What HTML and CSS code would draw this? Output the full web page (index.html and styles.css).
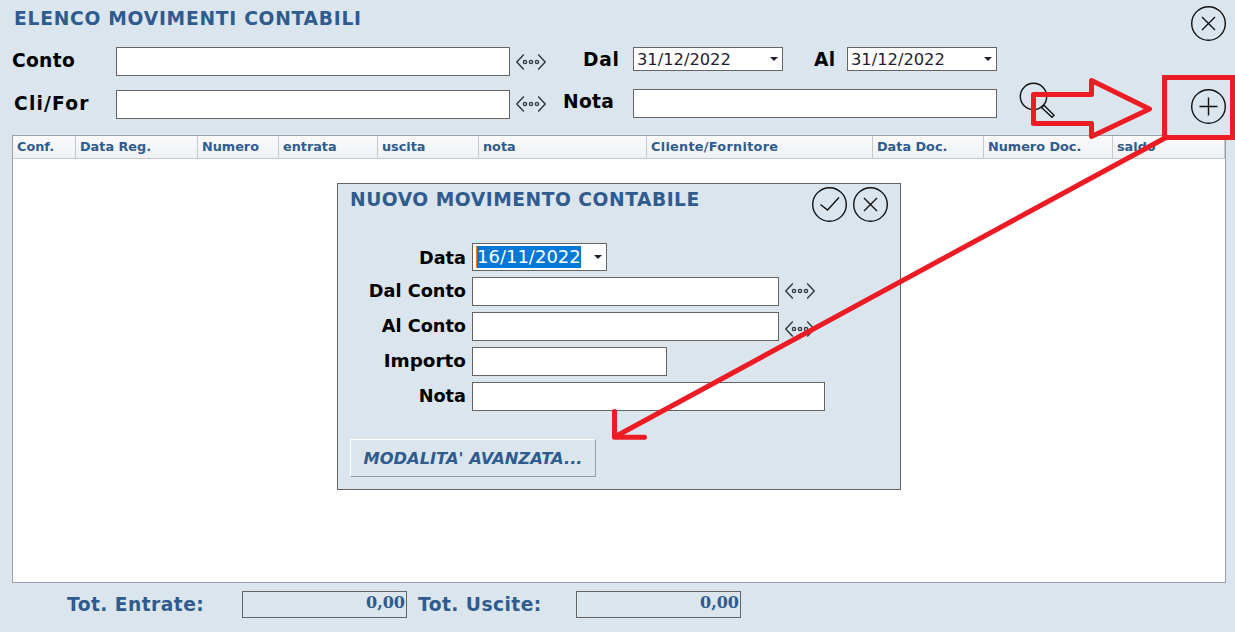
FILE: index.html
```html
<!DOCTYPE html>
<html lang="it">

<head>
    <meta charset="utf-8" />
    <title>Elenco movimenti contabili</title>
    <meta name="viewport" content="width=device-width, initial-scale=1">
    <link rel="stylesheet" href="styles.css">
</head>

<body>
    <!-- shared icons -->
    <svg class="defs" width="0" height="0">
        <symbol id="ic-close" viewBox="0 0 35 35">
            <circle cx="17.5" cy="17.5" r="16.8" />
            <path d="M11 11L24 24M24 11L11 24" />
        </symbol>
        <symbol id="ic-plus" viewBox="0 0 35 35">
            <circle cx="17.5" cy="17.5" r="16.8" />
            <path d="M8.5 17.5H26.5M17.5 8.5V26.5" />
        </symbol>
        <symbol id="ic-check" viewBox="0 0 35 35">
            <circle cx="17.5" cy="17.5" r="16.8" />
            <path d="M8.5 17.5L15.5 23L27 10.5" />
        </symbol>
        <symbol id="ic-pick" viewBox="0 0 30 16">
            <path d="M7.8 .5L.8 8L7.8 15.5M22.2 .5L29.2 8L22.2 15.5" />
            <circle cx="9" cy="8" r="1.6" />
            <circle cx="15" cy="8" r="1.6" />
            <circle cx="21" cy="8" r="1.6" />
        </symbol>
    </svg>

    <div class="titlebar">
        <h1 class="title">ELENCO MOVIMENTI CONTABILI</h1>
        <svg class="round"><use href="#ic-close" /></svg>
    </div>

    <!-- filters -->
    <div class="filters row1">
        <label class="lbl lbl-conto">Conto</label>
        <div class="field wide"></div>
        <svg class="pick"><use href="#ic-pick" /></svg>
        <label class="lbl lbl-dal">Dal</label>
        <div class="field date"><span>31/12/2022</span><i class="caret"></i></div>
        <label class="lbl lbl-al">Al</label>
        <div class="field date"><span>31/12/2022</span><i class="caret"></i></div>
    </div>
    <div class="filters row2">
        <label class="lbl lbl-clifor">Cli/For</label>
        <div class="field wide"></div>
        <svg class="pick"><use href="#ic-pick" /></svg>
        <label class="lbl lbl-nota">Nota</label>
        <div class="field note"></div>
        <svg class="search" viewBox="0 0 36 36">
            <circle cx="14.5" cy="14.5" r="13.2" />
            <path d="M22.5 25.5L25 23.3L35 33.3L33 35.3Z" />
        </svg>
        <svg class="round"><use href="#ic-plus" /></svg>
    </div>

    <!-- list -->
    <div class="grid">
        <div class="head">
            <div>Conf.</div>
            <div>Data Reg.</div>
            <div>Numero</div>
            <div>entrata</div>
            <div>uscita</div>
            <div>nota</div>
            <div class="cli">Cliente/Fornitore</div>
            <div>Data Doc.</div>
            <div>Numero Doc.</div>
            <div>saldo</div>
        </div>
    </div>

    <div class="totals">
        <span class="tot-lbl tot-in">Tot. Entrate:</span>
        <div class="tot-box">0,00</div>
        <span class="tot-lbl tot-out">Tot. Uscite:</span>
        <div class="tot-box">0,00</div>
    </div>

    <!-- new entry window -->
    <div class="dialog">
        <div class="dlg-head">
            <h2 class="title">NUOVO MOVIMENTO CONTABILE</h2>
            <svg class="round"><use href="#ic-check" /></svg>
            <svg class="round"><use href="#ic-close" /></svg>
        </div>
        <div class="form">
            <div class="line line-date">
                <label class="flbl">Data</label>
                <div class="field fdate"><span class="sel">16/11/2022</span><i class="caret"></i></div>
            </div>
            <div class="line">
                <label class="flbl">Dal Conto</label>
                <div class="field conto"></div>
                <svg class="pick"><use href="#ic-pick" /></svg>
            </div>
            <div class="line">
                <label class="flbl">Al Conto</label>
                <div class="field conto"></div>
                <svg class="pick low"><use href="#ic-pick" /></svg>
            </div>
            <div class="line">
                <label class="flbl importo-lbl">Importo</label>
                <div class="field importo"></div>
            </div>
            <div class="line">
                <label class="flbl">Nota</label>
                <div class="field fnote"></div>
            </div>
        </div>
        <div class="adv">MODALITA' AVANZATA...</div>
    </div>

    <!-- red marks -->
    <svg class="marks" viewBox="0 0 1235 632">
        <rect x="1164.5" y="77.5" width="68" height="60" />
        <path class="soft" d="M1033.5 94.5H1091.5V80.5L1149.5 109L1091.5 136.5V123.5H1033.5Z" />
        <path class="soft" d="M1165 138L614.5 437M614.5 411.5V437.3H644.5" />
    </svg>
</body>

</html>
```
FILE: styles.css
```css
* {
    box-sizing: border-box;
}

body {
    position: relative;
    margin: 0;
    width: 1235px;
    height: 632px;
    overflow: hidden;
    background: #dbe5ed;
    color: #000;
    font-family: "DejaVu Sans", Verdana, sans-serif;
}

svg {
    display: block;
    flex: none;
    fill: none;
    stroke: #111;
    stroke-width: 1.4;
}

.defs {
    position: absolute;
}

.titlebar {
    display: flex;
    justify-content: space-between;
    height: 47px;
    padding: 6px 9px 0 14px;
}

.title {
    margin: 0;
    color: #2f5b8f;
    font-size: 18.67px;
    font-weight: bold;
    line-height: 26px;
    letter-spacing: 0.75px;
    white-space: nowrap;
}

.round {
    width: 35px;
    height: 35px;
}

/* filters */
.filters {
    display: flex;
    align-items: flex-start;
    padding-left: 12px;
}

.row1 {
    height: 42px;
}

.row2 {
    height: 46px;
    padding-right: 9px;
}

.lbl {
    flex: none;
    font-size: 18.67px;
    font-weight: bold;
    line-height: 28px;
    letter-spacing: 0.3px;
    white-space: nowrap;
}

.lbl-conto {
    width: 104px;
}

.lbl-clifor {
    width: 104px;
    padding: 1px 0 0 2px;
    letter-spacing: 1.2px;
}

.lbl-dal {
    width: 87px;
    padding-left: 37px;
    margin-top: -1px;
    letter-spacing: 0.7px;
}

.lbl-nota {
    width: 87px;
    padding-left: 17px;
    margin-top: -1px;
}

.lbl-al {
    width: 64px;
    padding-left: 31px;
    margin-top: -1px;
}

.field {
    flex: none;
    height: 29px;
    border: 1px solid #646464;
    background: #fff;
}

.wide {
    width: 394px;
}

.row2 .wide {
    margin-top: 1px;
}

.pick {
    width: 30px;
    height: 16px;
    margin: 7px 0 0 6px;
    stroke: #333a40;
}

.date {
    display: flex;
    align-items: center;
    justify-content: space-between;
    width: 150px;
    height: 24px;
    padding: 0 4px 0 3px;
    color: #1e1e32;
    font-size: 16.3px;
}

.caret {
    border: 4px solid transparent;
    border-top-color: #1e1e32;
    border-bottom: 0;
}

.note {
    width: 364px;
}

.search {
    width: 36px;
    height: 36px;
    margin: -7px 0 0 22px;
}

.row2 .round {
    margin: 0 0 0 auto;
}

/* list */
.grid {
    width: 1214px;
    height: 448px;
    margin-left: 12px;
    border: 1px solid #9aa0a8;
    background: #fff;
}

.head {
    display: grid;
    grid-template-columns: 63px 122px 81px 99px 101px 168px 226px 111px 129px 1fr;
    height: 23px;
    border-bottom: 1px solid #c6c8d0;
    background: linear-gradient(#fafafb, #eff0f2);
    color: #2f5b8f;
    font-size: 12.8px;
    font-weight: bold;
    line-height: 21px;
}

.head div {
    padding-left: 4px;
    border-right: 1px solid #c6c8d0;
    white-space: nowrap;
}

.head .cli {
    letter-spacing: 0.3px;
}

/* totals */
.totals {
    display: flex;
    padding: 8px 0 0 67px;
    color: #2f5b8f;
    font-weight: bold;
}

.tot-lbl {
    font-size: 18.67px;
    line-height: 28px;
    letter-spacing: 0.45px;
    white-space: nowrap;
}

.tot-in {
    width: 175px;
}

.tot-out {
    width: 169px;
    padding-left: 11px;
}

.tot-box {
    width: 165px;
    height: 27px;
    padding-right: 1px;
    border: 1px solid #646464;
    font-family: "DejaVu Serif", serif;
    font-size: 16px;
    line-height: 22px;
    text-align: right;
}

/* new entry window */
.dialog {
    position: absolute;
    left: 337px;
    top: 183px;
    width: 564px;
    height: 307px;
    border: 1px solid #646464;
    background: #dbe5ed;
}

.dlg-head {
    display: flex;
    gap: 6px;
    height: 59px;
    padding: 3px 12px 0 12px;
}

.dlg-head .title {
    margin-right: auto;
    letter-spacing: 0.53px;
}

.form {
    display: flex;
    flex-direction: column;
    gap: 6px;
}

.line {
    display: flex;
    height: 29px;
}

.line-date {
    height: 28px;
}

.flbl {
    width: 128px;
    margin-right: 6px;
    font-size: 17.7px;
    font-weight: bold;
    line-height: 28px;
    text-align: right;
    white-space: nowrap;
}

.line-date .flbl {
    line-height: 30px;
}

.importo-lbl {
    font-size: 18.4px;
}

.fdate {
    display: flex;
    align-items: center;
    justify-content: space-between;
    width: 135px;
    height: 28px;
    padding: 0 4px 0 3px;
}

.sel {
    border-left: 1px solid #f08020;
    background: #0078d7;
    color: #fff;
    font-size: 18px;
    line-height: 22px;
}

.line .pick {
    margin-top: 6px;
}

.line .low {
    margin-top: 9px;
}

.conto {
    width: 307px;
}

.importo {
    width: 195px;
}

.fnote {
    width: 353px;
}

.adv {
    width: 246px;
    height: 38px;
    margin: 28px 0 0 12px;
    border: 1px solid #9c9c9c;
    border-top-color: #fff;
    border-left-color: #fff;
    color: #2f5b8f;
    font-size: 16.3px;
    font-style: italic;
    font-weight: bold;
    line-height: 37px;
    text-align: center;
    white-space: nowrap;
}

/* red marks drawn over everything */
.marks {
    position: absolute;
    left: 0;
    top: 0;
    width: 1235px;
    height: 632px;
    stroke: #ed1c24;
    stroke-width: 5;
}

.soft {
    stroke-linecap: round;
    stroke-linejoin: round;
}
```
